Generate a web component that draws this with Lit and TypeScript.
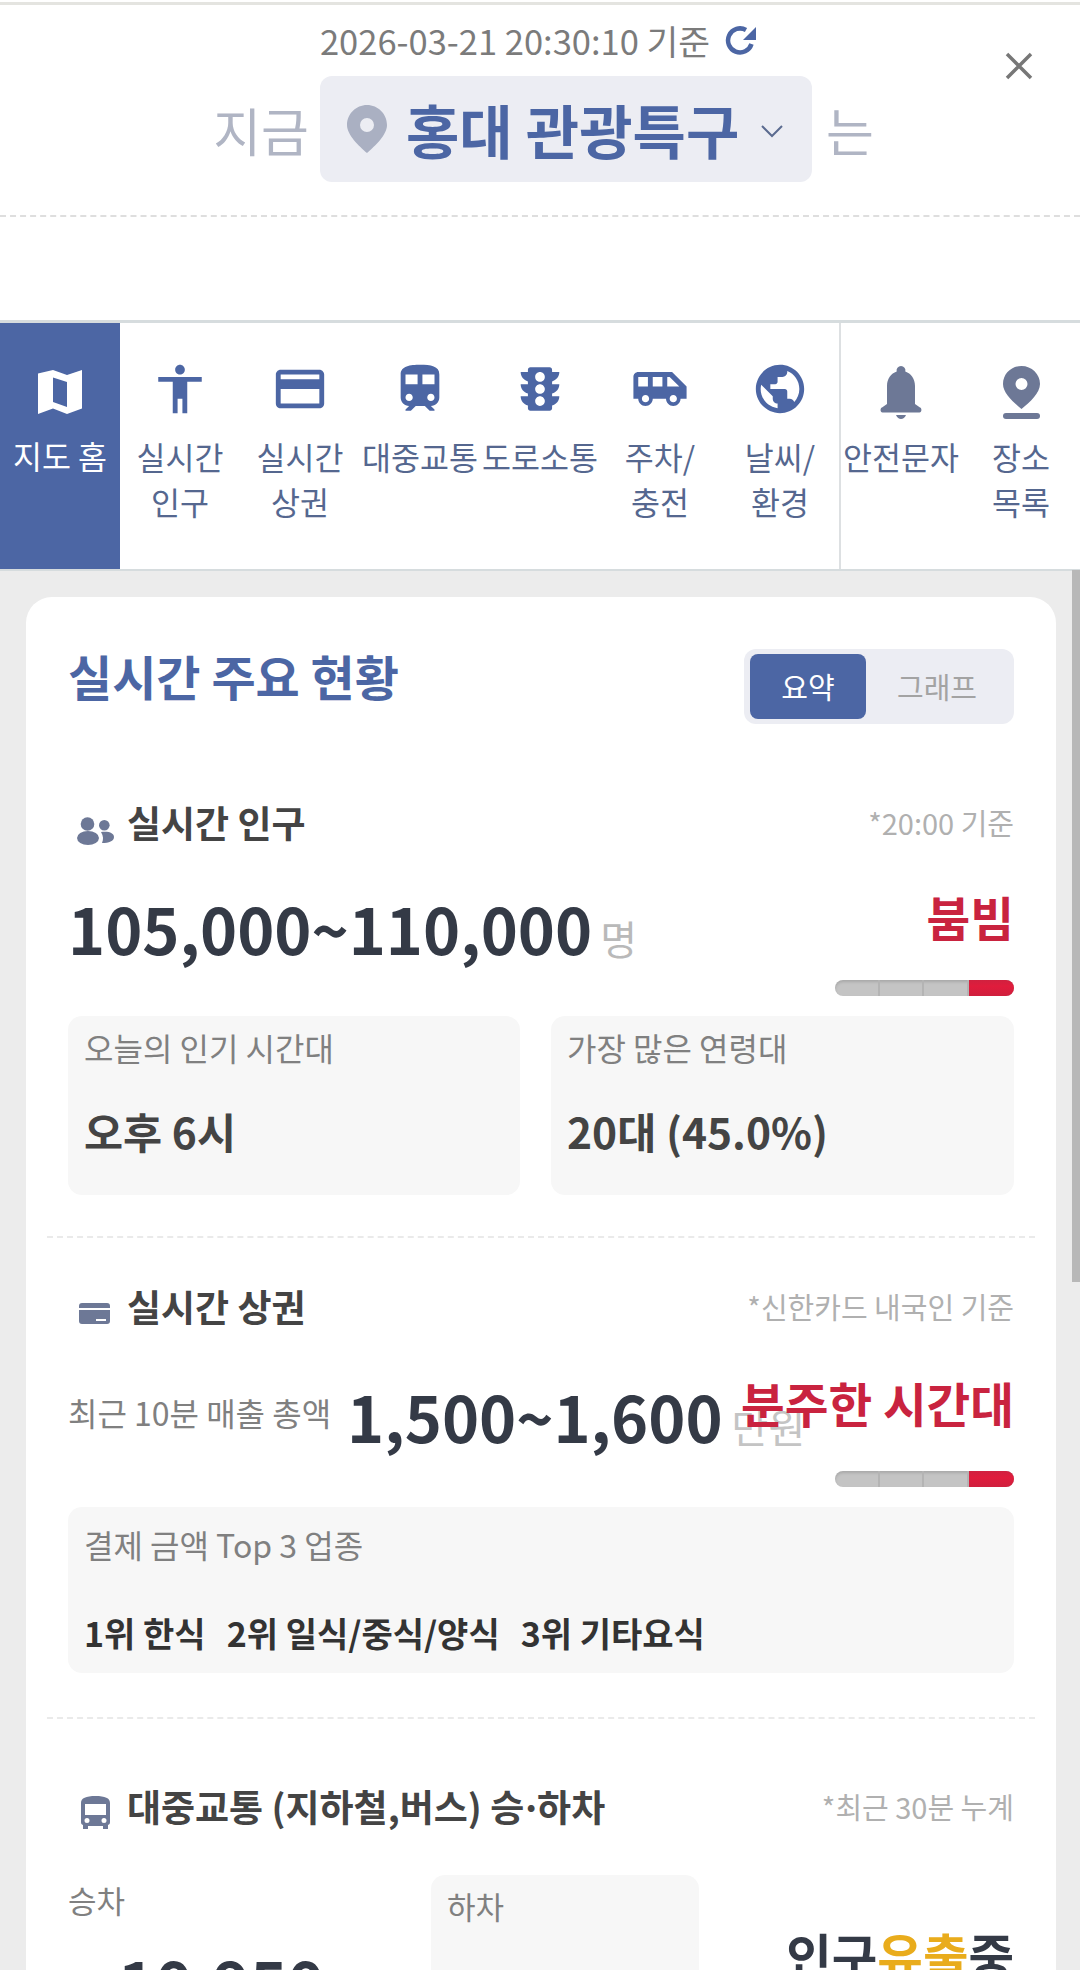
import { LitElement, html, css, svg } from 'lit';
import { customElement } from 'lit/decorators.js';

const NAV = [
  { label: '실시간<br>인구', d: 'M12 2c1.1 0 2 .9 2 2s-.9 2-2 2-2-.9-2-2 .9-2 2-2zm9 7h-6v13h-2v-6h-2v6H9V9H3V7h18v2z' },
  { label: '실시간<br>상권', d: 'M20 4H4c-1.11 0-1.99.89-1.99 2L2 18c0 1.11.89 2 2 2h16c1.11 0 2-.89 2-2V6c0-1.11-.89-2-2-2zm0 14H4v-6h16v6zm0-10H4V6h16v2z' },
  { label: '대중교통', d: 'M12 2c-4 0-8 .5-8 4v9.5C4 17.43 5.57 19 7.5 19L6 20.5v.5h2.23l2-2H14l2 2h2v-.5L16.5 19c1.93 0 3.5-1.57 3.5-3.5V6c0-3.5-3.58-4-8-4zM7.5 17c-.83 0-1.5-.67-1.5-1.5S6.67 14 7.5 14s1.5.67 1.5 1.5S8.33 17 7.5 17zm3.5-7H6V6h5v4zm2 0V6h5v4h-5zm3.5 7c-.83 0-1.5-.67-1.5-1.5s.67-1.5 1.5-1.5 1.5.67 1.5 1.5-.67 1.5-1.5 1.5z' },
  { label: '도로소통', d: 'M20 10h-3V8.86c1.72-.45 3-2 3-3.86h-3V4c0-.55-.45-1-1-1H8c-.55 0-1 .45-1 1v1H4c0 1.86 1.28 3.41 3 3.86V10H4c0 1.86 1.28 3.41 3 3.86V15H4c0 1.86 1.28 3.41 3 3.86V20c0 .55.45 1 1 1h8c.55 0 1-.45 1-1v-1.14c1.72-.45 3-2 3-3.86h-3v-1.14c1.72-.45 3-2 3-3.86zm-8 9c-1.11 0-2-.9-2-2s.89-2 2-2c1.1 0 2 .9 2 2s-.89 2-2 2zm0-5c-1.11 0-2-.9-2-2s.89-2 2-2c1.1 0 2 .9 2 2s-.89 2-2 2zm0-5c-1.11 0-2-.9-2-2 0-1.11.89-2 2-2 1.1 0 2 .89 2 2 0 1.1-.89 2-2 2z' },
  { label: '주차/<br>충전', d: 'M17 5H3c-1.1 0-2 .89-2 2v9h2c0 1.65 1.34 3 3 3s3-1.35 3-3h5.5c0 1.65 1.34 3 3 3s3-1.35 3-3H23v-5l-6-6zM3 11V7h4v4H3zm3 6.5c-.83 0-1.5-.67-1.5-1.5s.67-1.5 1.5-1.5 1.5.67 1.5 1.5-.67 1.5-1.5 1.5zm7-6.5H9V7h4v4zm4.5 6.5c-.83 0-1.5-.67-1.5-1.5s.67-1.5 1.5-1.5 1.5.67 1.5 1.5-.67 1.5-1.5 1.5zM15 11V7h1l4 4h-5z' },
  { label: '날씨/<br>환경', d: 'M12 2C6.48 2 2 6.48 2 12s4.48 10 10 10 10-4.48 10-10S17.52 2 12 2zm-1 17.93c-3.95-.49-7-3.85-7-7.93 0-.62.08-1.21.21-1.79L9 15v1c0 1.1.9 2 2 2v1.93zm6.9-2.54c-.26-.81-1-1.39-1.9-1.39h-1v-3c0-.55-.45-1-1-1H8v-2h2c.55 0 1-.45 1-1V7h2c1.1 0 2-.9 2-2v-.41c2.93 1.19 5 4.06 5 7.41 0 2.08-.8 3.97-2.1 5.39z' },
];

const PIN = 'M20 0C9 0 0 9 0 20c0 10 12 21 20 28 8-7 20-18 20-28C40 9 31 0 20 0zm0 27a7 7 0 1 1 0-14 7 7 0 0 1 0 14z';

function levelBar() {
  return html`<div class="bar"><i></i><i></i><i></i><i class="on"></i></div>`;
}

@customElement('app-root')
export class AppRoot extends LitElement {
  static styles = css`
    :host {
      display: block;
      position: relative;
      height: 1970px;
      overflow: hidden;
      background: #ececec;
      font-family: 'Noto Sans CJK KR', 'Noto Sans', sans-serif;
      color: #333;
    }
    * { box-sizing: border-box; }

    .top { position: relative; background: #fff; height: 320px; padding-top: 2px; }
    .top-line { height: 3px; background: #e4e4e0; }
    .stamp {
      display: flex;
      justify-content: center;
      align-items: center;
      gap: 15px;
      height: 46px;
      margin-top: 12px;
      padding-right: 3px;
      font-size: 34.5px;
      line-height: 46px;
      color: #7b7b7b;
    }
    .stamp svg { width: 32px; height: 32px; }
    .close { position: absolute; left: 1005px; top: 52px; width: 28px; height: 28px; }
    .where {
      display: flex;
      justify-content: center;
      align-items: center;
      gap: 14px;
      margin-top: 13px;
      padding-left: 7px;
      font-size: 52px;
      color: #b0b5c4;
    }
    .where .now { margin-right: -3px; }
    .pill {
      display: flex;
      align-items: center;
      width: 492px;
      height: 106px;
      padding-left: 27px;
      border-radius: 12px;
      background: #ecedf3;
      color: #4c66a4;
      font-size: 58px;
      font-weight: 700;
    }
    .pill .pin { width: 40px; height: 48px; margin-right: 19px; }
    .pill .chev { width: 22px; height: 13px; margin-left: 22px; margin-top: 4px; }
    .dash { margin-top: 33px; border-top: 2px dashed #dedede; }

    nav {
      display: flex;
      height: 251px;
      background: #fff;
      border-top: 3px solid #d6dcde;
      border-bottom: 2px solid #d6dcde;
    }
    .item {
      width: 120px;
      flex: none;
      padding-top: 37px;
      text-align: center;
      font-size: 31.5px;
      line-height: 45px;
      color: #55678f;
      white-space: nowrap;
    }
    .item svg { display: block; width: 58px; height: 58px; margin: 0 auto 16px; fill: #4c66a4; }
    .item.home { background: #4c66a4; color: #fff; }
    .item.home svg { width: 44px; height: 44px; margin: 10px auto 19px; fill: #fff; }
    .right { display: flex; border-left: 2px solid #dde0e2; margin-left: -1px; }
    .right .item { color: #55678f; padding-top: 43px; }
    .right svg { width: auto; height: 53px; margin-bottom: 15px; fill: #6d7896; }

    .card {
      margin: 26px 24px 0 26px;
      padding: 42px 42px 0;
      border-radius: 26px 26px 0 0;
      background: #fff;
    }
    .card-head { display: flex; justify-content: space-between; align-items: flex-start; }
    .card-title { font-size: 48px; line-height: 72px; font-weight: 700; color: #4c66a4; }
    .toggle {
      display: flex;
      width: 270px;
      height: 75px;
      padding: 5px 6px;
      margin-top: 10px;
      border-radius: 12px;
      background: #ecedf3;
      font-size: 29px;
      line-height: 64px;
      text-align: center;
      color: #a3a3a3;
    }
    .toggle span { flex: 1; }
    .toggle .on { flex: none; width: 116px; border-radius: 8px; background: #4c66a4; color: #fff; }

    .sec-head { display: flex; justify-content: space-between; align-items: center; height: 50px; }
    .sec-name { display: flex; align-items: center; font-size: 37px; font-weight: 700; color: #444; }
    .sec-name svg { width: 37px; height: 36px; margin: 14px 13px 0 9px; fill: #6d7896; flex: none; }
    .dot { letter-spacing: -5px; margin-left: -4px; }
    .note { font-size: 29px; color: #b0b0b0; }

    .main { display: flex; justify-content: space-between; }
    .num { font-size: 63px; line-height: 90px; font-weight: 700; color: #343a46; }
    .unit { font-size: 40px; line-height: 40px; font-weight: 400; color: #b9b9b9; margin-left: 8px; }
    .status { font-size: 47.500px; line-height: 64px; font-weight: 700; color: #c9233f; text-align: right; }
    .bar {
      display: flex;
      width: 179px;
      height: 16px;
      margin-left: auto;
      border-radius: 8px;
      overflow: hidden;
      background: #c4c4c4;
      box-shadow: inset 0 2px 3px rgba(0, 0, 0, .14);
    }
    .bar i { width: 45px; border-right: 2px solid #b4b4b4; }
    .bar i.on { width: 46px; border: 0; background: linear-gradient(#d0213f, #e01c3c 40%, #cf1f3d); }

    .boxes { display: flex; gap: 31px; }
    .box { height: 179px; border-radius: 14px; background: #f7f7f7; padding: 8px 16px; }
    .box .lab { font-size: 32px; line-height: 46px; color: #808080; }
    .box .val { margin-top: 30px; font-size: 42.500px; line-height: 62px; font-weight: 700; color: #444; }
    .divider { margin: 0 -21px; border-top: 2px dashed #eaeaea; }

    .sec2 { position: relative; display: flex; align-items: center; height: 90px; margin-top: 42px; }
    .sec2 .lab { font-size: 32px; color: #808080; margin: 0 16px 12px 0; }
    .sec2 .status { position: absolute; right: 0; top: -2px; }
    .sec2 .num { margin-bottom: 4px; }
    .sec2 .unit { margin-left: 9px; color: #c4c4c4; }
    .tops { height: 166px; margin-top: 20px; padding: 14px 16px; border-radius: 14px; background: #f7f7f7; }
    .tops .lab { font-size: 32px; line-height: 46px; color: #808080; }
    .tops .val { display: flex; gap: 21px; margin-top: 42px; font-size: 34px; line-height: 48px; font-weight: 700; color: #333; }

    .ride { display: flex; margin-top: 44px; }
    .ride .a { width: 363px; font-size: 31px; line-height: 46px; color: #808080; padding-top: 2px; }
    .ride .a b { display: block; margin: 12px 0 0 50px; font-size: 63px; line-height: 90px; color: #343a46; }
    .ride .b { width: 268px; height: 200px; padding: 8px 16px; border-radius: 14px; background: #f7f7f7; font-size: 31px; line-height: 46px; color: #808080; }
    .ride .c { flex: 1; text-align: right; font-size: 49.500px; line-height: 72px; font-weight: 700; color: #343a46; padding-top: 44px; }
    .ride .c em { font-style: normal; color: #e9ac1c; }

    .thumb { position: absolute; left: 1072px; top: 570px; width: 8px; height: 712px; background: #b8b8b8; }
  `;

  render() {
    return html`
      <div class="top">
        <div class="top-line"></div>
        <div class="stamp">
          <span>2026-03-21 20:30:10 기준</span>
          <svg viewBox="0 0 32 32" fill="none">
            <path d="M21 6A12 12 0 1 0 26.500 20" stroke="#4c66a4" stroke-width="4.500"></path>
            <path d="M31 3v13H18z" fill="#4c66a4"></path>
          </svg>
        </div>
        <svg class="close" viewBox="0 0 28 28"><path d="M2 2l24 24M26 2L2 26" stroke="#777" stroke-width="3.500"></path></svg>
        <div class="where">
          <span class="now">지금</span>
          <div class="pill">
            <svg class="pin" viewBox="0 0 40 48"><path d=${PIN} fill="#aab0c2"></path></svg>
            <span>홍대 관광특구</span>
            <svg class="chev" viewBox="0 0 22 13" fill="none"><path d="M1 1l10 10L21 1" stroke="#5b6b8f" stroke-width="2"></path></svg>
          </div>
          <span>는</span>
        </div>
        <div class="dash"></div>
      </div>

      <nav>
        <div class="item home">
          <svg viewBox="0 0 44 44"><path fill-rule="evenodd" d="M0 3.500L15 0l14 5 15-5v38.500L29 44l-14-5.500L0 44zM15 7.500V32l14 5V12z"></path></svg>
          지도 홈
        </div>
        ${NAV.map(n => html`
          <div class="item">
            <svg viewBox="0 0 24 24">${svg`<path d=${n.d}></path>`}</svg>
            <span .innerHTML=${n.label}></span>
          </div>
        `)}
        <div class="right">
          <div class="item">
            <svg viewBox="0 0 42 53"><path d="M21 0a4.500 4.500 0 0 1 4.300 5.600C31 7.500 35 13 35 20v18l5 3.500c2 .5 2 5-.5 5h-37c-2.500 0-2.500-4.500-.5-5L7 38V20C7 13 11 7.500 16.700 5.600A4.500 4.500 0 0 1 21 0zM16 49h10c-1 2.600-3 4-5 4s-4-1.400-5-4z"></path></svg>
            안전문자
          </div>
          <div class="item">
            <svg viewBox="0 0 37 53"><path d="M18.500 0C8.300 0 0 8 0 18c0 9 10 18 18.500 25C27 36 37 27 37 18 37 8 28.700 0 18.500 0zm0 24a6 6 0 1 1 0-12 6 6 0 0 1 0 12z"></path><rect y="47" width="37" height="6" rx="3"></rect></svg>
            장소<br>목록
          </div>
        </div>
      </nav>

      <div class="card">
        <div class="card-head">
          <div class="card-title">실시간 주요 현황</div>
          <div class="toggle"><span class="on">요약</span><span>그래프</span></div>
        </div>

        <div class="sec-head" style="margin-top:73px">
          <div class="sec-name">
            <svg viewBox="0 0 37 36"><circle cx="10.500" cy="13" r="6.800"></circle><circle cx="27.300" cy="14.300" r="5.300"></circle><ellipse cx="11" cy="27" rx="11" ry="7"></ellipse><path d="M24 21c8-1 13 1 13 5s-5 6-12 6c1.500-3.500 1.500-7-1-11z"></path></svg>
            실시간 인구
          </div>
          <span class="note">*20:00 기준</span>
        </div>
        <div class="main" style="margin-top:30px">
          <div class="num" style="margin-top:6px">105,000~110,000<span class="unit">명</span></div>
          <div style="margin-top:8px">
            <div class="status">붐빔</div>
            <div style="margin-top:31px">${levelBar()}</div>
          </div>
        </div>
        <div class="boxes" style="margin-top:20px">
          <div class="box" style="width:452px"><div class="lab">오늘의 인기 시간대</div><div class="val">오후 6시</div></div>
          <div class="box" style="width:463px"><div class="lab">가장 많은 연령대</div><div class="val">20대 (45.0%)</div></div>
        </div>
        <div class="divider" style="margin-top:41px"></div>

        <div class="sec-head" style="margin-top:43px">
          <div class="sec-name">
            <svg viewBox="0 0 37 36"><path fill-rule="evenodd" d="M5 8h25c2 0 3 1 3 3v2H2v-2c0-2 1-3 3-3zM2 15h31v11c0 2-1 3-3 3H5c-2 0-3-1-3-3zm17 9v2h10v-2z"></path></svg>
            실시간 상권
          </div>
          <span class="note">*신한카드 내국인 기준</span>
        </div>
        <div class="sec2">
          <span class="lab">최근 10분 매출 총액</span>
          <div class="num">1,500~1,600<span class="unit">만원</span></div>
          <div class="status">분주한 시간대</div>
        </div>
        <div style="margin-top:8px">${levelBar()}</div>
        <div class="tops">
          <div class="lab">결제 금액 Top 3 업종</div>
          <div class="val"><span>1위 한식</span><span>2위 일식/중식/양식</span><span>3위 기타요식</span></div>
        </div>
        <div class="divider" style="margin-top:44px"></div>

        <div class="sec-head" style="margin-top:62px">
          <div class="sec-name">
            <svg viewBox="0 0 37 36"><path fill-rule="evenodd" d="M18.500 1C28 1 33 3 33 8v19c0 1.500-.5 2.500-2 3v4h-5v-3H11v3H6v-4c-1.500-.5-2-1.500-2-3V8c0-5 5-7 14.500-7zM8 9v11h21V9zm2 14a2.500 2.500 0 1 0 0 5 2.500 2.500 0 0 0 0-5zm17 0a2.500 2.500 0 1 0 0 5 2.500 2.500 0 0 0 0-5z"></path></svg>
            <span>대중교통 (지하철,버스) 승<span class="dot">·</span>하차</span>
          </div>
          <span class="note">*최근 30분 누계</span>
        </div>
        <div class="ride">
          <div class="a">승차<b>10,950</b></div>
          <div class="b">하차</div>
          <div class="c">인구<em>유출</em>중</div>
        </div>
      </div>
      <div class="thumb"></div>
    `;
  }
}
